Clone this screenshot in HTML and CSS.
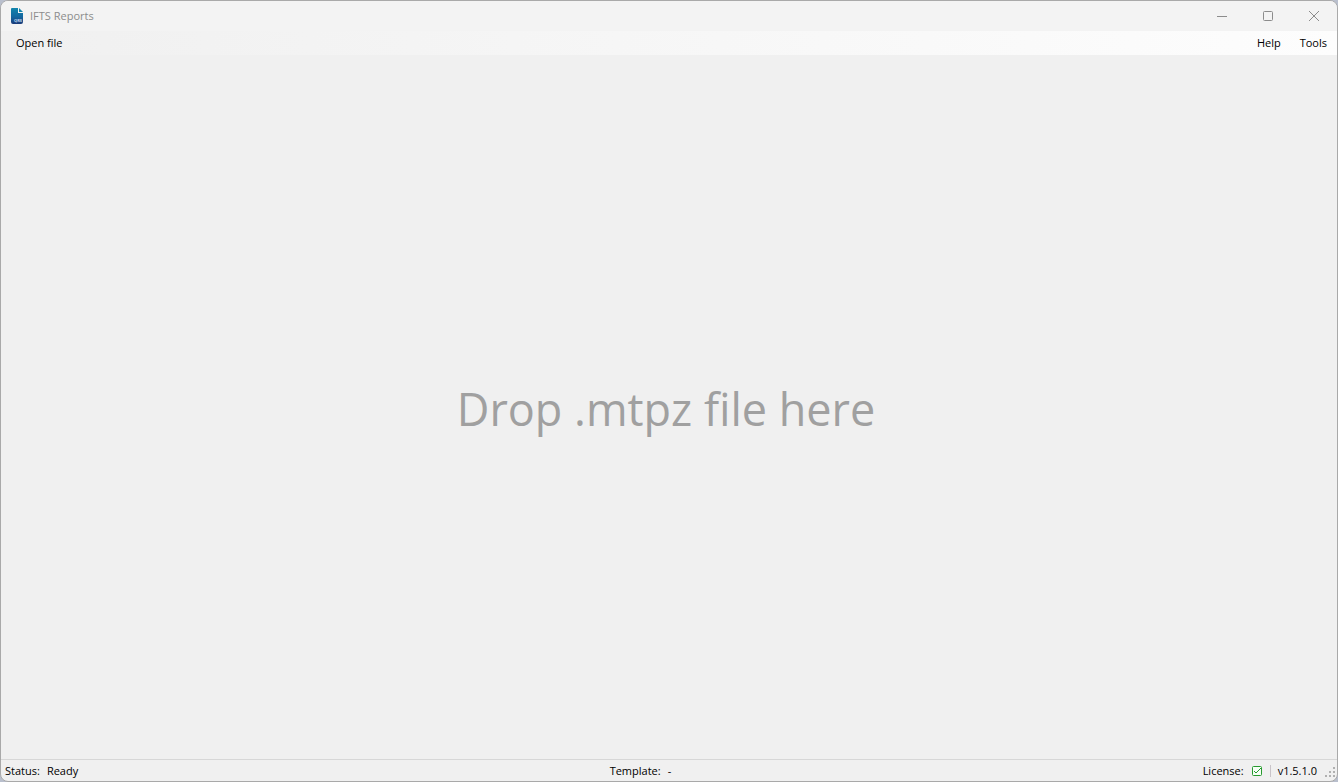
FILE: index.html
```html
<!DOCTYPE html>
<html lang="en">
<head>
<meta charset="utf-8">
<title>IFTS Reports</title>
<link rel="stylesheet" href="styles.css">
</head>
<body>
<div class="window">
  <header class="titlebar">
    <svg class="app-icon" width="14" height="18" viewBox="0 0 14 18" aria-hidden="true">
      <defs>
        <linearGradient id="sheet" x1="0" y1="0" x2="0" y2="1">
          <stop offset="0" stop-color="#1285ac"/>
          <stop offset=".55" stop-color="#1467a0"/>
          <stop offset="1" stop-color="#1b3a78"/>
        </linearGradient>
      </defs>
      <path d="M2 1H8V6H13V15Q13 17 11 17H3Q1 17 1 15V2Q1 1 2 1Z" fill="url(#sheet)"/>
      <path d="M9 1L13 5H9Z" fill="#1585ad"/>
      <text x="4" y="15" class="app-icon-text">QRS</text>
    </svg>
    <h1 class="title">IFTS Reports</h1>
    <div class="window-controls">
      <button class="control" type="button" aria-label="Minimize"><svg width="12" height="12" viewBox="0 0 12 12"><path d="M1 6.5H11"/></svg></button>
      <button class="control" type="button" aria-label="Maximize"><svg width="12" height="12" viewBox="0 0 12 12"><rect x="1.500" y="1.500" width="9" height="9" rx="1"/></svg></button>
      <button class="control" type="button" aria-label="Close"><svg width="12" height="12" viewBox="0 0 12 12"><path d="M1 1L11 11M11 1L1 11"/></svg></button>
    </div>
  </header>
  <nav class="menubar">
    <button class="menu-item" type="button">Open file</button>
    <div class="menu-right">
      <button class="menu-item" type="button">Help</button>
      <button class="menu-item" type="button">Tools</button>
    </div>
  </nav>
  <main class="dropzone"><p class="drop-text">Drop .mtpz file here</p></main>
  <footer class="statusbar">
    <div class="status-group"><span>Status:</span><span>Ready</span></div>
    <div class="status-group"><span>Template:</span><span>-</span></div>
    <div class="status-group">
      <span>License:</span>
      <svg class="license-icon" width="12" height="12" viewBox="0 0 12 12" role="img" aria-label="Valid"><rect x="1.500" y="1.500" width="9" height="9" rx="1" fill="#f6fff6"/><path d="M3 6L5 8L10 3" fill="none"/></svg>
      <span class="divider"></span>
      <span>v1.5.1.0</span>
      <svg class="grip" width="12" height="12" viewBox="0 0 12 12" aria-hidden="true"><path d="M9 0h2v2h-2zM5 4h2v2h-2zM9 4h2v2h-2zM1 8h2v2h-2zM5 8h2v2h-2zM9 8h2v2h-2z"/></svg>
    </div>
  </footer>
</div>
</body>
</html>
```
FILE: styles.css
```css
* { box-sizing: border-box; }

body {
  margin: 0;
  background: #b9bfcd;
  color: #000;
  font: 11px/16px "Open Sans", "Noto Sans", sans-serif;
}

button {
  border: 0;
  padding: 0;
  background: transparent;
  color: inherit;
  font: inherit;
}

.window {
  display: flex;
  flex-direction: column;
  height: 100vh;
  overflow: hidden;
  border: 1px solid #a9a9a9;
  border-radius: 8px;
  background: #f0f0f0;
}

.titlebar {
  display: flex;
  align-items: center;
  height: 30px;
  padding-left: 9px;
  background: #f3f3f3;
}

.app-icon-text {
  fill: #c3d8f0;
  font: 4px "Open Sans", sans-serif;
  font-weight: 700;
}

.title {
  flex: 1;
  margin: 0 0 0 6px;
  color: #8c8c8c;
  font-size: 11px;
  font-weight: 400;
}

.window-controls { display: flex; }

.control {
  display: grid;
  place-items: center;
  width: 46px;
  height: 28px;
}

.control svg {
  fill: none;
  stroke: #8c8c8c;
}

.menubar {
  display: flex;
  justify-content: space-between;
  align-items: center;
  height: 24px;
  padding: 0 10px 0 15px;
  background: linear-gradient(90deg, #f0f0f0, #fdfdfd);
}

.menu-right {
  display: flex;
  gap: 19px;
}

.dropzone {
  display: grid;
  flex: 1;
  place-items: center;
  padding: 4px 6px 0 0;
}

.drop-text {
  margin: 0;
  color: #a0a0a0;
  font-size: 45px;
  line-height: 64px;
}

.statusbar {
  display: flex;
  justify-content: space-between;
  align-items: center;
  height: 22px;
  padding: 0 1px 0 4px;
  border-top: 1px solid #d7d7d7;
}

.status-group {
  display: flex;
  align-items: center;
  gap: 7px;
}

.license-icon { stroke: #279a2e; }

.divider {
  width: 1px;
  height: 12px;
  background: #c9c4c9;
}

.grip {
  align-self: flex-end;
  fill: #b0b0b0;
}
```
